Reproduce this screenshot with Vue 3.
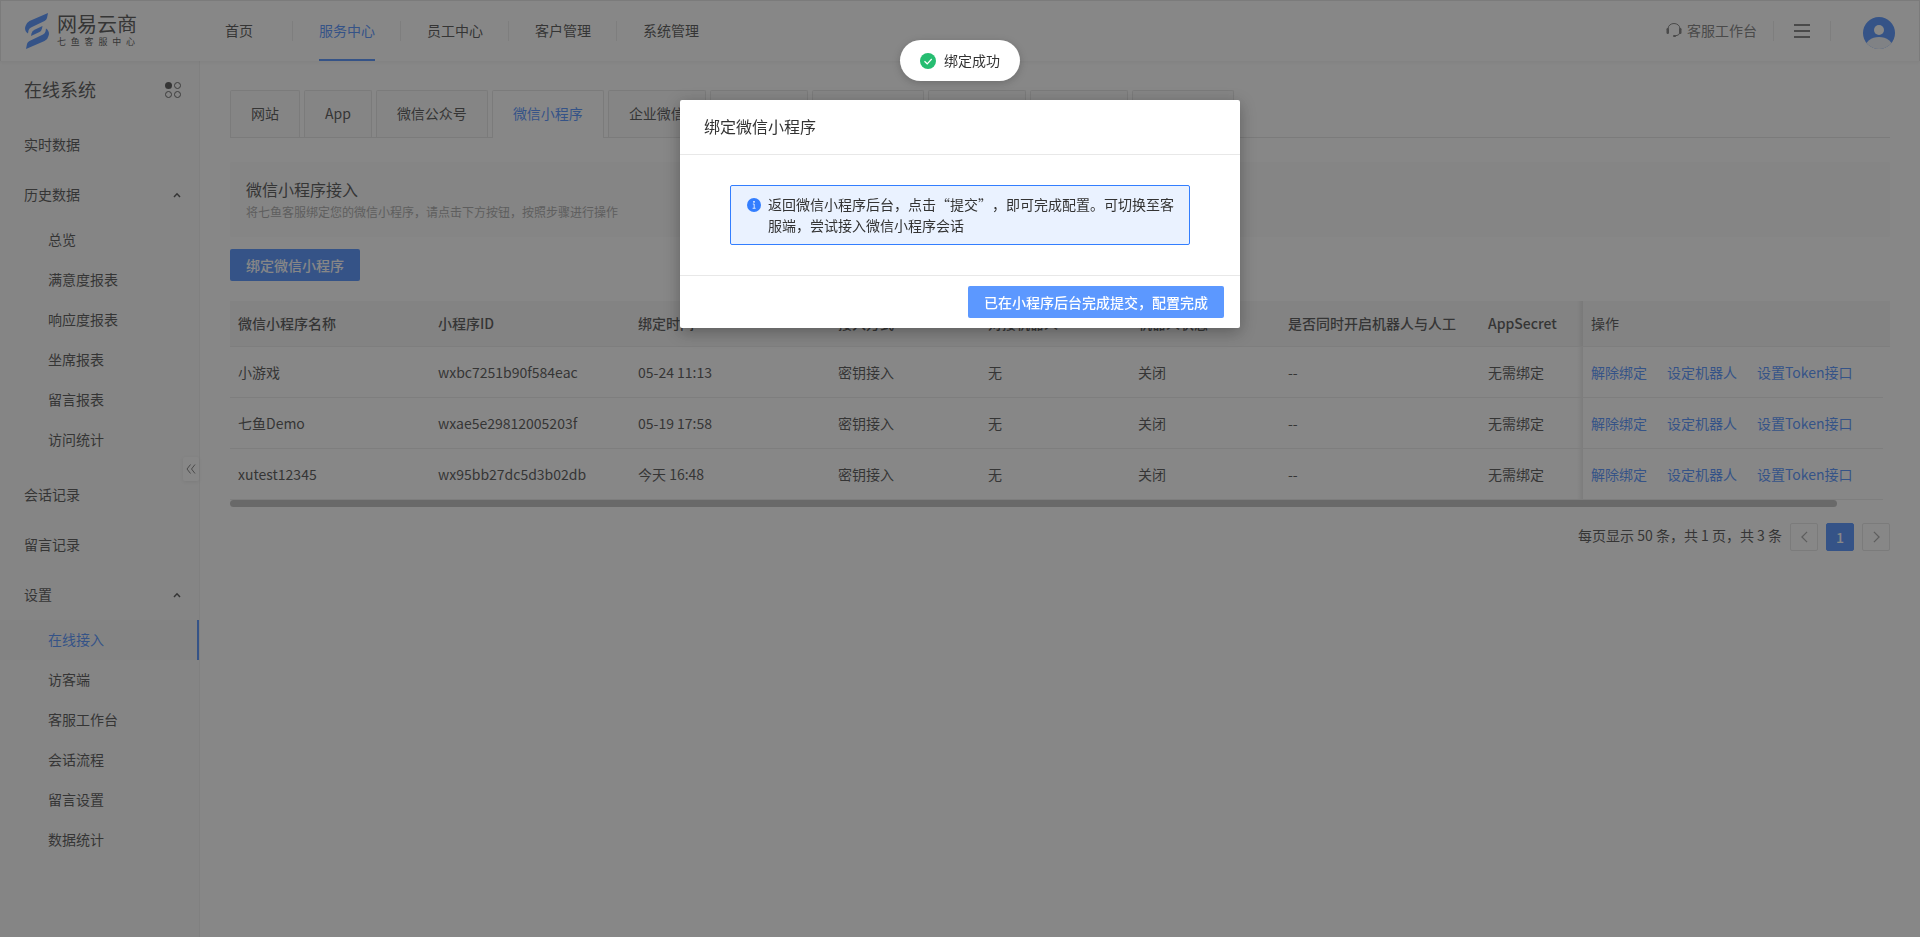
<script setup>
const nav = [
  { label: '首页', first: true },
  { label: '服务中心', active: true },
  { label: '员工中心' },
  { label: '客户管理' },
  { label: '系统管理' },
]

const menu = [
  { label: '实时数据' },
  {
    label: '历史数据',
    children: ['总览', '满意度报表', '响应度报表', '坐席报表', '留言报表', '访问统计'],
  },
  { label: '会话记录' },
  { label: '留言记录' },
  {
    label: '设置',
    children: ['在线接入', '访客端', '客服工作台', '会话流程', '留言设置', '数据统计'],
  },
]
const activeItem = '在线接入'

const tabs = ['网站', 'App', '微信公众号', '微信小程序', '企业微信', '新浪微博', '自定义渠道', '邮件接入', '短信接入', 'Web 接口']
const activeTab = '微信小程序'

const columns = ['微信小程序名称', '小程序ID', '绑定时间', '接入方式', '对接机器人', '机器人状态', '是否同时开启机器人与人工', 'AppSecret']
const rows = [
  ['小游戏', 'wxbc7251b90f584eac', '05-24 11:13', '密钥接入', '无', '关闭', '--', '无需绑定'],
  ['七鱼Demo', 'wxae5e29812005203f', '05-19 17:58', '密钥接入', '无', '关闭', '--', '无需绑定'],
  ['xutest12345', 'wx95bb27dc5d3b02db', '今天 16:48', '密钥接入', '无', '关闭', '--', '无需绑定'],
]
const actions = ['解除绑定', '设定机器人', '设置Token接口']
</script>

<template>
  <div class="page">
    <header class="topbar">
      <a class="logo" href="#">
        <svg class="logo-mark" viewBox="0 0 24 36" aria-hidden="true">
          <path d="M23 0 L22 5 Q21.500 7 19.500 8 L6 14.500 Q4 15.500 3.500 17.500 L3 20.500 Q0 18.500 0 15 L0.500 13 Q1 10 4.500 8 Z" />
          <path d="M1 36 L2 31 Q2.500 29 4.500 28 L18 21.500 Q20 20.500 20.500 18.500 L21 15.500 Q24 17.500 24 21 L23.500 23 Q23 26 19.500 28 Z" />
          <path d="M17.500 13 L17 15.500 Q16.500 18 14.500 19 L6 23 L6.500 20.500 Q7 18 9.500 16.700 Z" />
        </svg>
        <span class="logo-text">
          <span class="logo-name">网易云商</span>
          <span class="logo-sub"><span v-for="c in '七鱼客服中心'" :key="c">{{ c }}</span></span>
        </span>
      </a>
      <nav class="nav" aria-label="主导航">
        <a v-for="n in nav" :key="n.label" href="#" class="nav-item" :class="{ first: n.first, active: n.active }">
          <span>{{ n.label }}</span>
        </a>
      </nav>
      <div class="tools">
        <a class="workbench" href="#">
          <svg viewBox="0 0 16 14" aria-hidden="true">
            <path d="M2 6 C2 -1.300 14 -1.300 14 6" fill="none" stroke="currentColor" />
            <path d="M14 9.500 Q13.500 12.500 9 13" fill="none" stroke="currentColor" />
            <rect x="0.500" y="5" width="2.500" height="6" rx="1.200" fill="currentColor" />
            <rect x="13" y="5" width="2.500" height="6" rx="1.200" fill="currentColor" />
            <rect x="7" y="12" width="3" height="2" rx="1" fill="currentColor" />
          </svg>
          <span>客服工作台</span>
        </a>
        <button class="burger" type="button" aria-label="菜单"><i></i><i></i><i></i></button>
        <button class="avatar" type="button" aria-label="账户">
          <svg viewBox="0 0 32 32" aria-hidden="true">
            <defs><clipPath id="avatar-clip"><circle cx="16" cy="16" r="16" /></clipPath></defs>
            <g clip-path="url(#avatar-clip)">
              <rect width="32" height="32" fill="#337eff" />
              <circle cx="16" cy="13" r="5" fill="#fff" />
              <ellipse cx="16" cy="31" rx="14" ry="11" fill="#eef3fb" />
            </g>
          </svg>
        </button>
      </div>
    </header>

    <div class="layout">
      <aside class="sidebar">
        <div class="side-title">
          <h1>在线系统</h1>
          <svg viewBox="0 0 16 16" aria-hidden="true">
            <circle cx="3.500" cy="3.500" r="3.500" fill="#333" />
            <g fill="none" stroke="#444">
              <circle cx="12.500" cy="3.500" r="3" /><circle cx="3.500" cy="12.500" r="3" /><circle cx="12.500" cy="12.500" r="3" />
            </g>
          </svg>
        </div>
        <ul class="menu">
          <li v-for="m in menu" :key="m.label">
            <a href="#" class="menu-item">
              <span>{{ m.label }}</span>
              <svg v-if="m.children" viewBox="0 0 8 6" aria-hidden="true"><path d="M1 5 L4 1.800 L7 5" /></svg>
            </a>
            <ul v-if="m.children" class="submenu">
              <li v-for="c in m.children" :key="c">
                <a href="#" class="sub-item" :class="{ active: c === activeItem }">{{ c }}</a>
              </li>
            </ul>
          </li>
        </ul>
        <button class="collapse" type="button" aria-label="收起菜单">
          <svg viewBox="0 0 10 10" aria-hidden="true"><path d="M4.500 0.500 L1 5 L4.500 9.500 M9 0.500 L5.500 5 L9 9.500" /></svg>
        </button>
      </aside>

      <main class="content">
        <div class="tabs" role="tablist">
          <button v-for="t in tabs" :key="t" type="button" role="tab" class="tab" :class="{ active: t === activeTab }" :aria-selected="t === activeTab">{{ t }}</button>
        </div>

        <section class="intro">
          <h2>微信小程序接入</h2>
          <p>将七鱼客服绑定您的微信小程序，请点击下方按钮，按照步骤进行操作</p>
        </section>

        <button class="btn" type="button">绑定微信小程序</button>

        <table class="table">
          <colgroup>
            <col class="w-l" /><col class="w-l" /><col class="w-l" />
            <col class="w-m" /><col class="w-m" /><col class="w-m" />
            <col class="w-l" /><col /><col class="w-ops" /><col class="w-gutter" />
          </colgroup>
          <thead>
            <tr>
              <th v-for="(c, i) in columns" :key="c" scope="col" :class="{ edge: i === 7 }">{{ c }}</th>
              <th scope="col" colspan="2" class="ops-head">操作</th>
            </tr>
          </thead>
          <tbody>
            <tr v-for="r in rows" :key="r[0]">
              <td v-for="(v, i) in r" :key="i" :class="{ edge: i === 7 }">{{ v }}</td>
              <td><div class="ops"><a v-for="a in actions" :key="a" href="#">{{ a }}</a></div></td>
            </tr>
          </tbody>
        </table>
        <div class="scroll-track"><div class="scroll-thumb"></div></div>

        <nav class="pager" aria-label="分页">
          <span>每页显示 50 条，共 1 页，共 3 条</span>
          <button type="button" aria-label="上一页"><svg viewBox="0 0 8 14" aria-hidden="true"><path d="M7 1 L1 7 L7 13" /></svg></button>
          <button type="button" class="current">1</button>
          <button type="button" aria-label="下一页"><svg viewBox="0 0 8 14" aria-hidden="true"><path d="M1 1 L7 7 L1 13" /></svg></button>
        </nav>
      </main>
    </div>

    <div class="mask">
      <div class="dialog" role="dialog" aria-modal="true" aria-labelledby="dialog-title">
        <h2 id="dialog-title" class="dialog-head">绑定微信小程序</h2>
        <div class="dialog-body">
          <div class="alert">
            <svg viewBox="0 0 14 14" aria-hidden="true">
              <circle cx="7" cy="7" r="7" fill="#337eff" />
              <circle cx="7" cy="3.800" r="0.900" fill="#fff" />
              <path d="M5.800 6 H7.200 V10 M5.600 10.300 H8.600" fill="none" stroke="#fff" stroke-width="0.800" />
            </svg>
            <p>返回微信小程序后台，点击“提交”，即可完成配置。可切换至客服端，尝试接入微信小程序会话</p>
          </div>
        </div>
        <div class="dialog-foot">
          <button class="btn light" type="button">已在小程序后台完成提交，配置完成</button>
        </div>
      </div>
    </div>

    <div class="toast" role="status">
      <svg viewBox="0 0 16 16" aria-hidden="true">
        <circle cx="8" cy="8" r="8" fill="#26bd71" />
        <path d="M4.500 8.200 L7.200 10.800 L11.700 6" fill="none" stroke="#fff" stroke-width="1.200" />
      </svg>
      <span>绑定成功</span>
    </div>
  </div>
</template>

<style>
body {
  margin: 0;
  background: #fff;
}
</style>

<style scoped>
.page {
  display: flex;
  flex-direction: column;
  min-height: 100vh;
  color: #333;
  font: 14px/21px "Noto Sans CJK SC", "Noto Sans", sans-serif;
  text-spacing-trim: space-all;
}
.page * {
  box-sizing: border-box;
}
h1, h2, p, ul {
  margin: 0;
  padding: 0;
  font-weight: 400;
  list-style: none;
}
a {
  color: inherit;
  text-decoration: none;
}
button {
  padding: 0;
  border: 0;
  background: none;
  color: inherit;
  font: inherit;
}
svg {
  display: block;
  flex: none;
}

/* top bar */
.topbar {
  position: relative;
  z-index: 1;
  display: flex;
  height: 61px;
  border: 1px solid #e1e1e1;
  border-bottom: 0;
  background: #fff;
  box-shadow: 0 1px 4px rgba(0, 0, 0, 0.08);
}
.logo {
  display: flex;
  align-items: center;
  gap: 8px;
  width: 198px;
  padding-left: 24px;
}
.logo-mark {
  width: 24px;
  height: 36px;
  fill: #337eff;
}
.logo-text {
  display: flex;
  flex-direction: column;
  width: 78px;
  white-space: nowrap;
}
.logo-name {
  font-size: 20px;
  line-height: 22px;
}
.logo-sub {
  display: flex;
  justify-content: space-between;
  font-size: 9px;
  line-height: 14px;
}
.nav {
  display: flex;
  flex: 1;
}
.nav-item {
  position: relative;
  display: flex;
  padding: 0 26px;
}
.nav-item.first {
  padding-right: 40px;
}
.nav-item:not(:last-child)::after {
  content: "";
  position: absolute;
  top: 20px;
  right: 0;
  width: 1px;
  height: 20px;
  background: #e8e8e8;
}
.nav-item span {
  padding-top: 19px;
  border-bottom: 2px solid transparent;
}
.nav-item.active span {
  border-color: #337eff;
  color: #337eff;
}
.tools {
  display: flex;
  align-items: center;
  padding-right: 24px;
  color: #666;
}
.workbench {
  display: flex;
  align-items: center;
  gap: 5px;
  padding: 0 16px 2px 0;
}
.workbench svg {
  width: 16px;
  height: 14px;
}
.burger {
  display: flex;
  flex-direction: column;
  gap: 4px;
  justify-content: center;
  height: 20px;
  padding: 0 20px;
  border: solid #e8e8e8;
  border-width: 0 1px;
}
.burger i {
  width: 16px;
  height: 2px;
  background: #666;
}
.avatar {
  margin: 4px 0 0 32px;
}
.avatar svg {
  width: 32px;
  height: 32px;
}

/* side menu */
.layout {
  display: flex;
  flex: 1;
}
.sidebar {
  position: relative;
  flex: none;
  width: 200px;
  border-right: 1px solid #eee;
  background: #fafafa;
}
.side-title {
  display: flex;
  align-items: center;
  justify-content: space-between;
  height: 58px;
  margin-bottom: 1px;
  padding: 0 18px 0 24px;
}
.side-title h1 {
  padding-bottom: 2px;
  font-size: 18px;
}
.side-title svg {
  width: 16px;
  height: 16px;
}
.menu-item {
  display: flex;
  align-items: center;
  justify-content: space-between;
  height: 50px;
  padding: 0 18px 0 24px;
}
.menu-item svg {
  width: 8px;
  height: 6px;
  fill: none;
  stroke: #333;
  stroke-width: 1.5;
}
.submenu {
  margin-bottom: 10px;
}
.sub-item {
  display: flex;
  align-items: center;
  height: 40px;
  padding-left: 48px;
}
.menu-item span,
.sub-item {
  padding-bottom: 2px;
}
.sub-item.active {
  border-right: 2px solid #337eff;
  background: #f5f5f5;
  color: #337eff;
}
.collapse {
  position: absolute;
  top: 396px;
  right: 0;
  display: flex;
  align-items: center;
  justify-content: center;
  width: 16px;
  height: 24px;
  border-radius: 2px;
  background: #fff;
  box-shadow: 0 1px 4px rgba(0, 0, 0, 0.1);
}
.collapse svg {
  width: 10px;
  height: 10px;
  fill: none;
  stroke: #666;
}

/* content */
.content {
  flex: 1;
  min-width: 0;
  padding: 29px 30px;
}
.tabs {
  display: flex;
  gap: 4px;
  border-bottom: 1px solid #e1e1e1;
}
.tab {
  height: 47px;
  padding: 0 20px 1px;
  border: 1px solid #e1e1e1;
  border-bottom: 0;
  border-radius: 2px 2px 0 0;
  background: #fafafa;
  white-space: nowrap;
}
.tab.active {
  height: 48px;
  margin-bottom: -1px;
  padding-bottom: 2px;
  background: #fff;
  color: #337eff;
}
.intro {
  margin: 24px 0 12px;
  padding: 15px 16px;
  border-radius: 2px;
  background: #f9f9f9;
}
.intro h2 {
  font-size: 16px;
  line-height: 24px;
}
.intro p {
  color: #999;
  font-size: 12px;
  line-height: 21px;
}
.btn {
  height: 32px;
  padding: 0 16px;
  border-radius: 2px;
  background: #337eff;
  color: #fff;
  font-weight: 500;
}
.btn.light {
  background: #5c98ff;
}
.table {
  width: 100%;
  margin-top: 20px;
  border-spacing: 0;
  table-layout: fixed;
}
.w-l { width: 200px; }
.w-m { width: 150px; }
.w-ops { width: 300px; }
.w-gutter { width: 7px; }
th, td {
  height: 51px;
  padding: 0 8px;
  border-bottom: 1px solid #e8e8e8;
  text-align: left;
  white-space: nowrap;
}
th {
  height: 46px;
  background: #f5f5f5;
  font-weight: 500;
}
.ops-head {
  font-weight: 400;
}
.edge {
  background-image: linear-gradient(to left, rgba(0, 0, 0, 0.1), transparent 6px);
}
.ops {
  display: flex;
  gap: 20px;
  color: #337eff;
}
.scroll-track {
  padding-right: 53px;
}
.scroll-thumb {
  height: 7px;
  border-radius: 4px;
  background: #b4b4b4;
}
.pager {
  display: flex;
  justify-content: flex-end;
  gap: 8px;
  margin-top: 16px;
  line-height: 25px;
}
.pager button {
  display: flex;
  align-items: center;
  justify-content: center;
  width: 28px;
  height: 28px;
  border: 1px solid #e1e1e1;
  border-radius: 2px;
}
.pager svg {
  width: 7px;
  height: 12px;
  fill: none;
  stroke: #999;
  stroke-width: 1.5;
}
.pager .current {
  border-color: #337eff;
  background: #337eff;
  color: #fff;
  font-weight: 500;
}

/* overlays */
.mask {
  position: fixed;
  z-index: 10;
  inset: 0;
  display: flex;
  align-items: flex-start;
  justify-content: center;
  padding-top: 100px;
  background: rgba(55, 55, 55, 0.6);
}
.dialog {
  width: 560px;
  border-radius: 2px;
  background: #fff;
  box-shadow: 0 4px 16px rgba(0, 0, 0, 0.3);
}
.dialog-head {
  padding: 14px 24px 16px;
  border-bottom: 1px solid #e8e8e8;
  font-size: 16px;
  line-height: 24px;
}
.dialog-body {
  padding: 30px 50px;
}
.alert {
  display: flex;
  gap: 7px;
  padding: 8px 14px 8px 16px;
  border: 1px solid #337eff;
  border-radius: 2px;
  background: #eaf2ff;
}
.alert svg {
  width: 14px;
  height: 14px;
  margin-top: 4px;
}
.dialog-foot {
  padding: 10px 16px;
  border-top: 1px solid #e8e8e8;
}
.dialog-foot .btn {
  display: block;
  margin-left: auto;
}
.toast {
  position: fixed;
  z-index: 20;
  top: 40px;
  left: 50%;
  display: flex;
  align-items: center;
  gap: 8px;
  padding: 10px 20px;
  border-radius: 21px;
  background: #fff;
  box-shadow: 0 2px 8px rgba(0, 0, 0, 0.2);
  transform: translateX(-50%);
}
.toast svg {
  width: 16px;
  height: 16px;
}
</style>
